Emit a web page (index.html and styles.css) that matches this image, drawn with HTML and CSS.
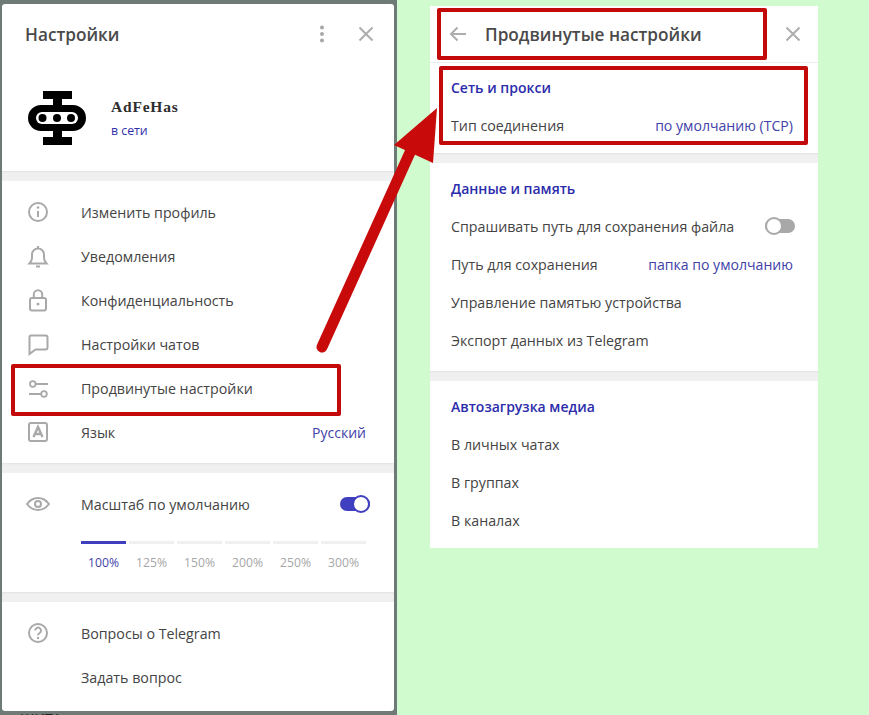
FILE: index.html
```html
<!DOCTYPE html>
<html lang="ru">
<head>
<meta charset="utf-8">
<title>Настройки</title>
<link rel="stylesheet" href="styles.css">
</head>
<body>
<div class="page">
  <div class="backdrop">
    <div class="modal">
      <header class="modal-head">
        <h1 class="modal-title">Настройки</h1>
        <svg class="dots" width="8" height="18" viewBox="0 0 8 18"><circle cx="4" cy="2.5" r="2"/><circle cx="4" cy="9" r="2"/><circle cx="4" cy="15.5" r="2"/></svg>
        <svg class="close" width="16" height="16" viewBox="0 0 16 16"><path d="M1.5 1.5l13 13M14.500 1.500l-13 13"/></svg>
      </header>
      <section class="profile">
        <svg class="avatar" width="58" height="54" viewBox="0 0 58 54">
          <path fill="#000" d="M15 0h29v8H34v6h11a13 13 0 0 1 0 26H34v6h10v8H15v-8h10v-6H13a13 13 0 0 1 0-26h12V8H15z"/>
          <rect x="8" y="21" width="42" height="12" rx="6" fill="#fff"/>
          <circle cx="14.500" cy="27" r="4"/><circle cx="29" cy="27" r="4"/><circle cx="43" cy="27" r="4"/>
        </svg>
        <div class="profile-text">
          <div class="profile-name">AdFeHas</div>
          <div class="profile-status">в сети</div>
        </div>
      </section>
      <div class="sep"></div>
      <nav class="menu">
        <div class="row"><svg class="ico" width="24" height="24" viewBox="0 0 24 24"><circle cx="12" cy="12" r="9"/><path d="M12 11v6"/><circle class="fill" cx="12" cy="7.500" r="1.300"/></svg><span class="label">Изменить профиль</span></div>
        <div class="row"><svg class="ico" width="24" height="24" viewBox="0 0 24 24"><path d="M3.500 19.500h17c-1.500-1.500-2.500-3-2.500-5.500v-3.500a6 6 0 0 0-12 0V14c0 2.500-1 4-2.500 5.500z"/><path d="M12 2v2.500M10 22.500h4"/></svg><span class="label">Уведомления</span></div>
        <div class="row"><svg class="ico" width="24" height="24" viewBox="0 0 24 24"><rect x="4" y="10" width="16" height="12.500" rx="2"/><path d="M7.800 10V6.500a4.200 4.200 0 0 1 8.400 0V10"/><circle class="fill" cx="12" cy="16" r="1.500"/></svg><span class="label">Конфиденциальность</span></div>
        <div class="row"><svg class="ico" width="24" height="24" viewBox="0 0 24 24"><path d="M5 3.500h14.500a2 2 0 0 1 2 2v10a2 2 0 0 1-2 2H9.500L3.500 22V5a1.500 1.500 0 0 1 1.500-1.500z"/></svg><span class="label">Настройки чатов</span></div>
        <div class="row"><svg class="ico thin" width="24" height="24" viewBox="0 0 24 24"><circle cx="6.800" cy="8" r="2.800"/><path d="M9.600 8H22M3 18h12"/><circle cx="18" cy="18" r="2.800"/></svg><span class="label">Продвинутые настройки</span></div>
        <div class="row"><svg class="ico" width="24" height="24" viewBox="0 0 24 24"><rect x="3" y="3" width="18" height="18" rx="2"/><path class="letter" d="M7.500 17L12 7l4.500 10M9 14h6"/></svg><span class="label">Язык</span><span class="value">Русский</span></div>
      </nav>
      <div class="sep"></div>
      <section class="scale">
        <div class="scale-row">
          <svg class="ico" width="24" height="24" viewBox="0 0 24 24"><path d="M1 12c3-4 6.500-6 11-6s8 2 11 6c-3 4-6.500 6-11 6s-8-2-11-6z"/><circle cx="12" cy="12" r="3"/></svg>
          <span class="label">Масштаб по умолчанию</span>
          <span class="toggle toggle-on"><span class="knob"></span></span>
        </div>
        <div class="scale-steps">
          <div class="step step-on">100%</div>
          <div class="step">125%</div>
          <div class="step">150%</div>
          <div class="step">200%</div>
          <div class="step">250%</div>
          <div class="step">300%</div>
        </div>
      </section>
      <div class="sep"></div>
      <section class="menu menu-last">
        <div class="row"><svg class="ico" width="24" height="24" viewBox="0 0 24 24"><circle cx="12" cy="12" r="9"/><path d="M9.200 9.500a2.900 2.900 0 1 1 4.400 2.500c-1 .6-1.600 1-1.600 2.300"/><circle class="fill" cx="12" cy="17" r="1.200"/></svg><span class="label">Вопросы о Telegram</span></div>
        <div class="row row-plain"><span class="label">Задать вопрос</span></div>
      </section>
    </div>
    <div class="behind">ШИТА</div>
  </div>
  <main class="stage">
    <div class="panel">
      <header class="panel-head">
        <svg class="back" width="18" height="16" viewBox="0 0 18 16"><path d="M17 8H2M8.500 1.500L2 8l6.500 6.500"/></svg>
        <h2 class="panel-title">Продвинутые настройки</h2>
        <svg class="close" width="16" height="16" viewBox="0 0 16 16"><path d="M1.500 1.500l13 13M14.500 1.500l-13 13"/></svg>
      </header>
      <section class="group group-first">
        <h3 class="group-title">Сеть и прокси</h3>
        <div class="opt"><span>Тип соединения</span><span class="value">по умолчанию (TCP)</span></div>
      </section>
      <div class="sep"></div>
      <section class="group group-data">
        <h3 class="group-title">Данные и память</h3>
        <div class="opt"><span>Спрашивать путь для сохранения файла</span><span class="toggle toggle-off"><span class="knob"></span></span></div>
        <div class="opt"><span>Путь для сохранения</span><span class="value">папка по умолчанию</span></div>
        <div class="opt"><span>Управление памятью устройства</span></div>
        <div class="opt"><span>Экспорт данных из Telegram</span></div>
      </section>
      <div class="sep"></div>
      <section class="group">
        <h3 class="group-title">Автозагрузка медиа</h3>
        <div class="opt"><span>В личных чатах</span></div>
        <div class="opt"><span>В группах</span></div>
        <div class="opt"><span>В каналах</span></div>
      </section>
    </div>
  </main>
  <div class="mark mark-item"></div>
  <div class="mark mark-head"></div>
  <div class="mark mark-net"></div>
  <svg class="arrow" width="869" height="715" viewBox="0 0 869 715">
    <path d="M322 347L412 148" stroke="#c90a0a" stroke-width="11" stroke-linecap="round" fill="none"/>
    <path d="M437 108L394 145L433 163z" fill="#c90a0a"/>
  </svg>
</div>
</body>
</html>
```

FILE: styles.css
```css
* { box-sizing: border-box; }
html, body { margin: 0; padding: 0; }
body { font-family: "Open Sans", "Noto Sans", sans-serif; font-size: 14px; color: #444; background: #cffbcf; }
h1, h2, h3 { margin: 0; }

.page { position: relative; display: flex; width: 869px; height: 715px; overflow: hidden; }

.backdrop { position: relative; width: 397px; height: 715px; flex: none; padding: 4px 3px 0 2px; background: #6e7a76; }
.behind { padding-left: 18px; font-size: 14px; line-height: 16px; color: #222; }

.modal { display: flex; flex-direction: column; width: 392px; height: 707px; background: #fff; border-radius: 3px; overflow: hidden; }
.modal-head { display: flex; align-items: center; height: 62px; padding: 0 20px 2px 23px; }
.modal-title { flex: 1; font-size: 17.200px; font-weight: 600; color: #4a4a4a; }
.dots { fill: #a8a8a8; margin-right: 32px; }
.close { fill: none; stroke: #adadad; stroke-width: 2; flex: none; }

.profile { display: flex; align-items: center; height: 105px; padding: 0 0 1px 26px; }
.avatar { flex: none; fill: #000; }
.profile-text { margin-left: 25px; }
.profile-name { font-family: "Liberation Serif", serif; font-weight: 700; font-size: 15.500px; letter-spacing: 0.800px; line-height: 20px; color: #2e2e2e; }
.profile-status { margin-top: 6px; font-size: 12.300px; line-height: 16px; color: #2f2fa8; }

.sep { height: 10px; flex: none; background: #f0f0f0; box-shadow: inset 0 2px 2px -1px #e2e2e2; }

.menu { padding: 10px 0 8px; }
.menu-last { padding-bottom: 0; }
.row { display: flex; align-items: center; height: 44px; padding: 0 28px 2px 24px; }
.row-plain { padding-left: 79px; }
.ico { flex: none; fill: none; stroke: #a9a9a9; stroke-width: 2; margin-right: 31px; }
.ico.thin { stroke-width: 1.800; }
.ico .fill { fill: #a9a9a9; stroke: none; }
.ico .letter { stroke-width: 2.400; }
.label { flex: 1; font-size: 14.250px; color: #444; white-space: nowrap; }
.value { color: #4141a8; font-size: 14px; white-space: nowrap; }

.scale { height: 119px; padding-top: 10px; }
.scale-row { display: flex; align-items: center; height: 44px; padding: 0 24px 2px 24px; }
.scale-steps { display: grid; grid-template-columns: repeat(6, 1fr); column-gap: 3px; margin: 14px 28px 0 79px; }
.step { padding-top: 10px; border-top: 3px solid #f0f0f0; text-align: center; font-size: 12.200px; line-height: 18px; color: #a6a6a6; }
.step-on { border-top-color: #3f3fc0; color: #3f3fa8; }

.toggle { position: relative; display: block; width: 30px; height: 14px; border-radius: 7px; flex: none; }
.knob { position: absolute; top: -2px; width: 18px; height: 18px; border-radius: 50%; background: #fff; }
.toggle-on { background: #3f3fc0; }
.toggle-on .knob { right: 0; border: 2px solid #3f3fc0; }
.toggle-off { background: #a8a8a8; }
.toggle-off .knob { left: 0; border: 2px solid #a8a8a8; }

.stage { flex: 1; padding: 6px 0 0 33px; }
.panel { width: 388px; height: 542px; background: #fff; }
.panel-head { display: flex; align-items: center; height: 57px; padding: 0 17px 0 19px; border-bottom: 1px solid #ececec; }
.back { flex: none; fill: none; stroke: #adadad; stroke-width: 2; margin-right: 18px; }
.panel-title { flex: 1; font-size: 17.200px; font-weight: 600; color: #4a4a4a; }

.group { padding: 7px 25px 8px 21px; }
.group-first { height: 90px; padding-top: 6px; }
.group-data { padding-bottom: 11px; }
.group-title { height: 38px; line-height: 38px; font-size: 14px; font-weight: 600; color: #2b2bab; }
.opt { display: flex; align-items: center; justify-content: space-between; height: 38px; padding-bottom: 2px; font-size: 14.250px; color: #444; }
.opt .value { font-size: 14.100px; }
.group .toggle { margin-right: -2px; }

.mark { position: absolute; border: 4px solid #c20a0a; border-radius: 2px; }
.mark-item { left: 11px; top: 364px; width: 330px; height: 52px; }
.mark-head { left: 437px; top: 8px; width: 330px; height: 52px; }
.mark-net { left: 439px; top: 66px; width: 369px; height: 79px; }
.arrow { position: absolute; left: 0; top: 0; pointer-events: none; }
```
